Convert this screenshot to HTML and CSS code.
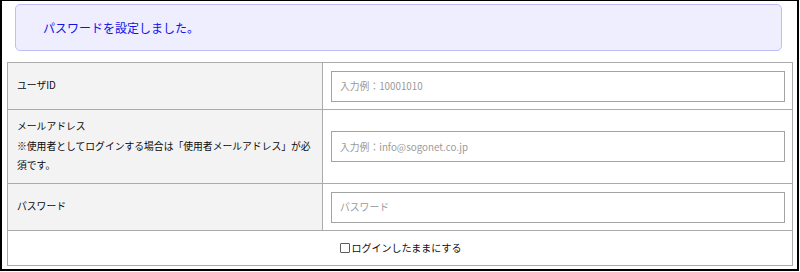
FILE: index.html
```html
<!DOCTYPE html>
<html>
<head>
  <meta charset="utf-8">
  <title>ログイン</title>
  <link rel="stylesheet" href="styles.css">
</head>
<body>
  <div class="frame">
    <div class="notice">パスワードを設定しました。</div>

    <table class="login-table">
      <tr class="row-short">
        <th>ユーザID</th>
        <td><input type="text" class="input" placeholder="入力例：10001010"></td>
      </tr>
      <tr class="row-tall">
        <th>メールアドレス<br>※使用者としてログインする場合は「使用者メールアドレス」が必須です。</th>
        <td><input type="text" class="input" placeholder="入力例：info@sogonet.co.jp"></td>
      </tr>
      <tr class="row-short">
        <th>パスワード</th>
        <td><input type="password" class="input" placeholder="パスワード"></td>
      </tr>
      <tr class="row-check">
        <td colspan="2" class="check-cell">
          <label class="check-label"><input type="checkbox" class="checkbox">ログインしたままにする</label>
        </td>
      </tr>
    </table>
  </div>
</body>
</html>
```

FILE: styles.css
```css
/* Base */
* {
  margin: 0;
  padding: 0;
  box-sizing: border-box;
  font-family: "Noto Sans CJK JP", "Noto Sans", sans-serif;
}

body {
  width: 800px;
  height: 272px;
  background-color: #ffffff;
  color: #111111;
}

.frame {
  width: 799px;
  height: 271px;
  border: 2px solid #000000;
  border-top-width: 1px;
  padding: 3px 4px 0 5px;
}

/* Message */
.notice {
  display: flex;
  align-items: center;
  height: 47px;
  margin: 0 11px 0 8px;
  padding-left: 27px;
  background-color: #eeeefe;
  border: 1px solid #bfbff5;
  border-radius: 5px;
  color: #1212e8;
  font-size: 12px;
}

/* Table */
.login-table {
  width: 786px;
  margin-top: 11px;
  border-collapse: collapse;
  border: 1px solid #ababab;
  font-size: 9.8px;
}

.login-table th,
.login-table td {
  border: 1px solid #ababab;
  vertical-align: middle;
}

.login-table th {
  width: 315px;
  padding: 7px 9px;
  background-color: #f3f3f3;
  text-align: left;
  font-weight: normal;
  line-height: 19.5px;
  color: #0a0a0a;
}

.login-table td {
  padding: 0 7px 0 8px;
  background-color: #ffffff;
}

.row-short {
  height: 47px;
}

.row-tall {
  height: 74px;
}

.row-check {
  height: 35px;
}

.input {
  display: block;
  width: 100%;
  height: 31px;
  padding: 0 8px;
  border: 1px solid #a3a3a3;
  background-color: #ffffff;
  font-size: 9.8px;
  color: #333333;
}

.input::placeholder {
  color: #9a9a9a;
}

.check-cell {
  text-align: center;
}

.check-label {
  display: inline-flex;
  align-items: center;
  font-size: 10px;
  color: #111111;
}

.checkbox {
  appearance: none;
  width: 10px;
  height: 10px;
  margin-right: 2px;
  border: 1px solid #5c5c5c;
  border-radius: 1px;
  background-color: #ffffff;
}
```
